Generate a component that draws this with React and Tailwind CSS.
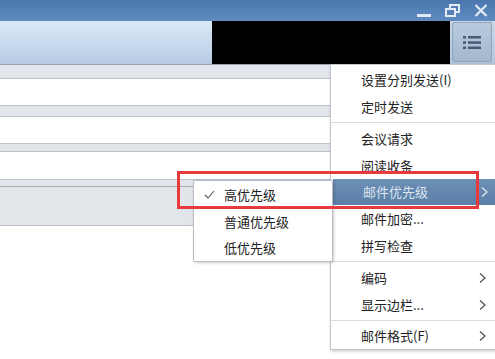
import React from "react";

const font = { fontFamily: '"Noto Sans CJK SC", "Noto Sans", sans-serif' };

function Chevron({ light }) {
  return (
    <svg width="7" height="11" viewBox="0 0 7 11" className="absolute left-[148px] top-1/2 -translate-y-1/2">
      <polyline points="1,1 6,5.5 1,10" fill="none" stroke={light ? "#dfe8f1" : "#555"} strokeWidth="1.3" />
    </svg>
  );
}

function Item({ label, arrow, active, h = "h-[27px]" }) {
  return (
    <div
      className={
        "relative flex items-center pl-[30px] text-[13px] " +
        h +
        (active
          ? " bg-gradient-to-b from-[#6e90b6] to-[#5a7ea7] text-[#dbe4ee] ml-[2px] pl-[28px]"
          : " text-[#222]")
      }
    >
      {label}
      {arrow && <Chevron light={active} />}
    </div>
  );
}

function Sep() {
  return (
    <div className="h-[5px] flex items-center">
      <div className="h-px w-full bg-[#dcdfe3]" />
    </div>
  );
}

function Field({ h }) {
  return <div className={"bg-white border-y border-[#b9c1c9] " + h} />;
}

export default function App() {
  return (
    <div className="relative w-[495px] h-[359px] overflow-hidden bg-white" style={font}>
      {/* title bar */}
      <div className="h-[21px] bg-gradient-to-b from-[#4a77ad] to-[#5f8bc1] flex items-center justify-end pr-[7px] gap-[14px]">
        <svg width="14" height="16" viewBox="0 0 14 16">
          <rect x="0" y="11" width="14" height="3" fill="#e2eaf3" />
        </svg>
        <svg width="15" height="13" viewBox="0 0 15 13">
          <rect x="5" y="1" width="9" height="7" fill="none" stroke="#e2eaf3" strokeWidth="2" />
          <rect x="1" y="5" width="9" height="7" fill="#5680b7" stroke="#e2eaf3" strokeWidth="2" />
        </svg>
        <svg width="14" height="13" viewBox="0 0 14 13">
          <path d="M1.5 1 L12.5 12 M12.5 1 L1.5 12" stroke="#e2eaf3" strokeWidth="2.2" />
        </svg>
      </div>
      {/* toolbar */}
      <div className="h-[44px] flex border-b border-[#97a4b2]">
        <div className="w-[212px] bg-gradient-to-b from-[#dbe9f7] to-[#b6cce3]" />
        <div className="w-[238px] bg-black" />
        <div className="flex-1 bg-gradient-to-b from-[#c9d8e8] to-[#b3c7dc] pl-[2px] pr-[3px] pt-px">
          <div className="h-[40px] rounded-[2px] border border-[#8fa3ba] bg-gradient-to-b from-[#b9cade] to-[#a3b7cd] flex items-center justify-center">
            <svg width="18" height="15" viewBox="0 0 18 15">
              <g fill="#465a73">
                <rect x="0" y="1" width="3" height="2.5" />
                <rect x="5" y="1" width="13" height="2.5" />
                <rect x="0" y="6.3" width="3" height="2.5" />
                <rect x="5" y="6.3" width="13" height="2.5" />
                <rect x="0" y="11.5" width="3" height="2.5" />
                <rect x="5" y="11.5" width="13" height="2.5" />
              </g>
            </svg>
          </div>
        </div>
      </div>
      {/* form rows */}
      <div className="bg-[#e2e6eb] flex flex-col">
        <div className="h-[13px]" />
        <Field h="h-[28px]" />
        <div className="h-[10px]" />
        <Field h="h-[28px]" />
        <div className="h-[7px]" />
        <Field h="h-[29px]" />
        <div className="h-[7px] border-b border-[#a7aeb6]" />
        <div className="h-[39px] border-b border-[#b9c1c9]" />
      </div>

      {/* main menu */}
      <div className="absolute left-[330px] top-[64px] w-[175px] bg-white border border-[#c3c8ce] shadow-[1px_1px_3px_rgba(0,0,0,0.25)] pt-px">
        <Item label="设置分别发送(I)" />
        <Item label="定时发送" />
        <Sep />
        <Item label="会议请求" />
        <Item label="阅读收条" />
        <Item label="邮件优先级" arrow active h="h-[26px]" />
        <Item label="邮件加密..." />
        <Item label="拼写检查" />
        <Sep />
        <Item label="编码" arrow />
        <Item label="显示边栏..." arrow />
        <Sep />
        <Item label="邮件格式(F)" arrow h="h-[26px]" />
      </div>

      {/* submenu */}
      <div className="absolute left-[193px] top-[180px] w-[140px] bg-white border border-[#b7bec6] rounded-[2px] shadow-[1px_1px_3px_rgba(0,0,0,0.2)] text-[13px] text-[#222]">
        <div className="relative h-[27px] flex items-center pl-[30px]">
          <svg width="11" height="9" viewBox="0 0 11 9" className="absolute left-[10px] top-[9px]">
            <polyline points="1,5 4,8 10,1" fill="none" stroke="#555" strokeWidth="1.1" />
          </svg>
          高优先级
        </div>
        <div className="h-[27px] flex items-center pl-[30px]">普通优先级</div>
        <div className="h-[26px] flex items-center pl-[30px]">低优先级</div>
      </div>

      {/* red highlight box */}
      <div className="absolute left-[177px] top-[171px] w-[302px] h-[38px] border-[3px] border-[#e63a3d]" />
    </div>
  );
}
